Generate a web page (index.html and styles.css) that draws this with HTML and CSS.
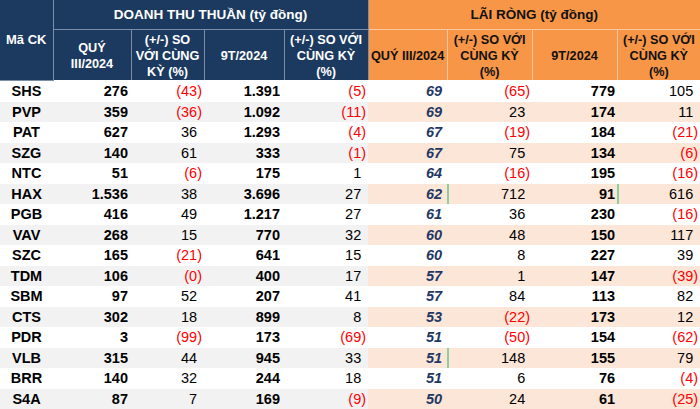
FILE: index.html
```html
<!DOCTYPE html>
<html lang="vi">
<head>
<meta charset="utf-8">
<title>Doanh thu - Lãi ròng</title>
<link rel="stylesheet" href="styles.css">
</head>
<body>
<table class="tbl">
  <colgroup>
    <col class="c-code"><col class="c-q"><col class="c-yoy1"><col class="c-9t"><col class="c-yoy2">
    <col class="c-rq"><col class="c-ryoy1"><col class="c-r9t"><col class="c-ryoy2">
  </colgroup>
  <thead>
    <tr class="h1">
      <th class="navy code" rowspan="2">Mã CK</th>
      <th class="navy group" colspan="4">DOANH THU THUẦN (tỷ đồng)</th>
      <th class="orange group" colspan="4">LÃI RÒNG (tỷ đồng)</th>
    </tr>
    <tr class="h2">
      <th class="navy">QUÝ<br>III/2024</th>
      <th class="navy">(+/-) SO<br>VỚI CÙNG<br>KỲ (%)</th>
      <th class="navy">9T/2024</th>
      <th class="navy">(+/-) SO VỚI<br>CÙNG KỲ<br>(%)</th>
      <th class="orange">QUÝ III/2024</th>
      <th class="orange">(+/-) SO VỚI<br>CÙNG KỲ<br>(%)</th>
      <th class="orange">9T/2024</th>
      <th class="orange">(+/-) SO VỚI<br>CÙNG KỲ<br>(%)</th>
    </tr>
  </thead>
  <tbody>
    <tr><td class="code">SHS</td><td class="q">276</td><td class="y1 n">(43)</td><td class="t9">1.391</td><td class="y2 n">(5)</td><td class="rq">69</td><td class="ry1 n">(65)</td><td class="r9">779</td><td class="ry2 p">105</td></tr>
    <tr><td class="code">PVP</td><td class="q">359</td><td class="y1 n">(36)</td><td class="t9">1.092</td><td class="y2 n">(11)</td><td class="rq">69</td><td class="ry1 p">23</td><td class="r9">174</td><td class="ry2 p">11</td></tr>
    <tr><td class="code">PAT</td><td class="q">627</td><td class="y1 p">36</td><td class="t9">1.293</td><td class="y2 n">(4)</td><td class="rq">67</td><td class="ry1 n">(19)</td><td class="r9">184</td><td class="ry2 n">(21)</td></tr>
    <tr><td class="code">SZG</td><td class="q">140</td><td class="y1 p">61</td><td class="t9">333</td><td class="y2 n">(1)</td><td class="rq">67</td><td class="ry1 p">75</td><td class="r9">134</td><td class="ry2 n">(6)</td></tr>
    <tr><td class="code">NTC</td><td class="q">51</td><td class="y1 n">(6)</td><td class="t9">175</td><td class="y2 p">1</td><td class="rq">64</td><td class="ry1 n">(16)</td><td class="r9">195</td><td class="ry2 n">(16)</td></tr>
    <tr><td class="code">HAX</td><td class="q">1.536</td><td class="y1 p">38</td><td class="t9">3.696</td><td class="y2 p">27</td><td class="rq">62</td><td class="ry1 p bar">712</td><td class="r9">91</td><td class="ry2 p bar">616</td></tr>
    <tr><td class="code">PGB</td><td class="q">416</td><td class="y1 p">49</td><td class="t9">1.217</td><td class="y2 p">27</td><td class="rq">61</td><td class="ry1 p">36</td><td class="r9">230</td><td class="ry2 n">(16)</td></tr>
    <tr><td class="code">VAV</td><td class="q">268</td><td class="y1 p">15</td><td class="t9">770</td><td class="y2 p">32</td><td class="rq">60</td><td class="ry1 p">48</td><td class="r9">150</td><td class="ry2 p">117</td></tr>
    <tr><td class="code">SZC</td><td class="q">165</td><td class="y1 n">(21)</td><td class="t9">641</td><td class="y2 p">15</td><td class="rq">60</td><td class="ry1 p">8</td><td class="r9">227</td><td class="ry2 p">39</td></tr>
    <tr><td class="code">TDM</td><td class="q">106</td><td class="y1 n">(0)</td><td class="t9">400</td><td class="y2 p">17</td><td class="rq">57</td><td class="ry1 p">1</td><td class="r9">147</td><td class="ry2 n">(39)</td></tr>
    <tr><td class="code">SBM</td><td class="q">97</td><td class="y1 p">52</td><td class="t9">207</td><td class="y2 p">41</td><td class="rq">57</td><td class="ry1 p">84</td><td class="r9">113</td><td class="ry2 p">82</td></tr>
    <tr><td class="code">CTS</td><td class="q">302</td><td class="y1 p">18</td><td class="t9">899</td><td class="y2 p">8</td><td class="rq">53</td><td class="ry1 n">(22)</td><td class="r9">173</td><td class="ry2 p">12</td></tr>
    <tr><td class="code">PDR</td><td class="q">3</td><td class="y1 n">(99)</td><td class="t9">173</td><td class="y2 n">(69)</td><td class="rq">51</td><td class="ry1 n">(50)</td><td class="r9">154</td><td class="ry2 n">(62)</td></tr>
    <tr><td class="code">VLB</td><td class="q">315</td><td class="y1 p">44</td><td class="t9">945</td><td class="y2 p">33</td><td class="rq">51</td><td class="ry1 p bar">148</td><td class="r9">155</td><td class="ry2 p">79</td></tr>
    <tr><td class="code">BRR</td><td class="q">140</td><td class="y1 p">32</td><td class="t9">244</td><td class="y2 p">18</td><td class="rq">51</td><td class="ry1 p">6</td><td class="r9">76</td><td class="ry2 n">(4)</td></tr>
    <tr><td class="code">S4A</td><td class="q">87</td><td class="y1 p">7</td><td class="t9">169</td><td class="y2 n">(9)</td><td class="rq">50</td><td class="ry1 p">24</td><td class="r9">61</td><td class="ry2 n">(25)</td></tr>
  </tbody>
</table>
</body>
</html>
```

FILE: styles.css
```css
html, body {
  margin: 0;
  padding: 0;
  background: #ffffff;
}
body {
  font-family: "Liberation Sans", Arial, sans-serif;
  width: 700px;
  height: 409px;
  overflow: hidden;
}
.tbl {
  width: 700px;
  table-layout: fixed;
  border-collapse: collapse;
  border-spacing: 0;
}
.c-code { width: 53px; }
.c-q { width: 78px; }
.c-yoy1 { width: 73px; }
.c-9t { width: 80px; }
.c-yoy2 { width: 84px; }
.c-rq { width: 79px; }
.c-ryoy1 { width: 85px; }
.c-r9t { width: 85px; }
.c-ryoy2 { width: 83px; }

th {
  font-weight: bold;
  text-align: center;
  vertical-align: middle;
  padding: 0 1px;
  line-height: 16px;
  font-size: 12.7px;
}
th.navy {
  background: #1c3a5f;
  color: #ffffff;
  border: 1px solid #7d8fa8;
}
th.orange {
  background: #f79646;
  color: #111111;
  border: 1px solid #fac8a0;
}
th.code { font-size: 13px; border-left: none; border-top: none; }
.h1 th { height: 29px; border-top: none; }
.h1 th.group { font-size: 13.5px; }
.h1 th.orange { border-right: none; }
.h2 th { height: 47px; padding-top: 2px; border-bottom: 1px solid #ffffff; }
.h2 th:last-child { border-right: none; }

td {
  height: 20.5px;
  padding: 0;
  font-size: 14.5px;
  line-height: 16px;
  color: #000000;
  text-align: right;
  vertical-align: middle;
  white-space: nowrap;
}
tbody tr:nth-child(even) td { background: #f2f2f2; }
tbody tr:nth-child(even) td.rq,
tbody tr:nth-child(even) td.ry1,
tbody tr:nth-child(even) td.r9,
tbody tr:nth-child(even) td.ry2 { background: #fce6d8; }

td.code { text-align: center; font-weight: bold; }
td.q { font-weight: bold; padding-right: 3px; }
td.y1 { padding-right: 2px; }
td.t9 { font-weight: bold; padding-right: 4px; }
td.y2 { padding-right: 2px; }
td.rq { font-weight: bold; font-style: italic; color: #1f3864; padding-right: 5px; }
td.ry1 { padding-right: 2px; }
td.r9 { font-weight: bold; padding-right: 2px; }
td.ry2 { padding-right: 2px; }

td.n { color: #ff0000; }
td.p::after { content: ")"; visibility: hidden; }
td.bar { box-shadow: inset 2px 0 0 #8ccf9a; }
```
